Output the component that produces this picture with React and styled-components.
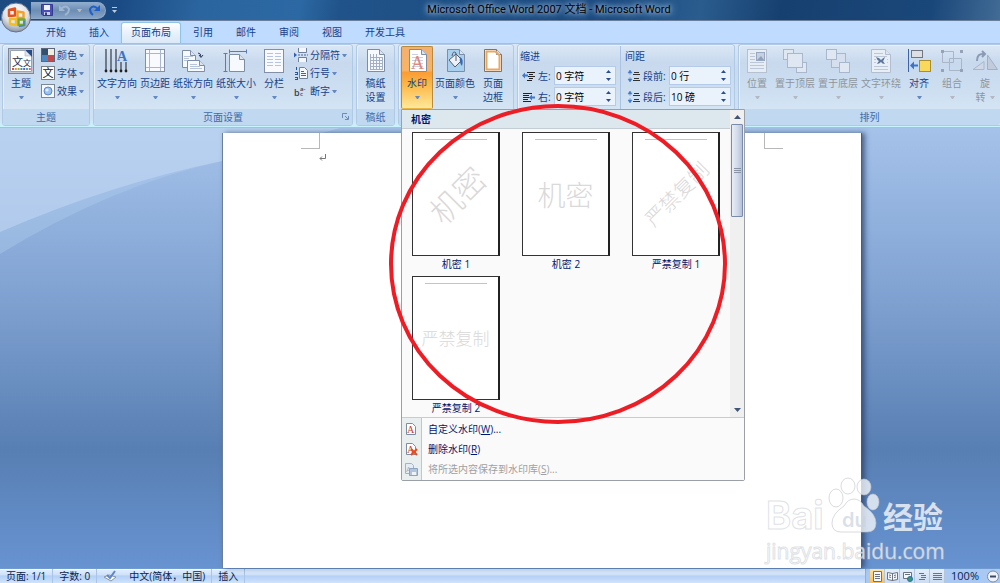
import React from 'react';
import styled, { createGlobalStyle, css } from 'styled-components';

const GlobalStyle = createGlobalStyle`
  * {
    box-sizing: border-box;
  }

  body {
    margin: 0;
    overflow: hidden;
    font-family: 'Open Sans', 'Noto Sans CJK SC', sans-serif;
    font-size: 10px;
    line-height: 14px;
    color: #15428b;
  }

  button,
  input {
    margin: 0;
    padding: 0;
    border: 0;
    background: none;
    color: inherit;
    font: inherit;
  }

  svg {
    display: block;
    flex: none;
  }
`;

const Window = styled.div`
  display: flex;
  flex-direction: column;
  position: relative;
  height: 100vh;
  overflow: hidden;
`;

/* ---------- title bar ---------- */

const TitleBar = styled.header`
  display: flex;
  align-items: center;
  height: 21px;
  flex: none;
  padding-left: 31px;
  border-bottom: 1px solid #6a7f9c;
  background: linear-gradient(
    100deg,
    #1d4a80 0%,
    #1b4b84 12%,
    #2b659f 20%,
    #2c68a3 30%,
    #205389 34%,
    #1c4a80 60%,
    #2a5c8e 70%,
    #16406f 78%,
    #1a477a 93%,
    #426b95 100%
  );
`;

const QuickAccess = styled.div`
  display: flex;
  align-items: center;
  gap: 6px;
  width: 75px;
  height: 17px;
  padding-left: 10px;
  border: 1px solid #8fabcb;
  border-left: 0;
  border-radius: 0 9px 9px 0;
  background: linear-gradient(#8fabcd, #6d8db3 50%, #86a3c6);
`;

const BarButton = styled.button`
  display: flex;
  align-items: center;
`;

const Title = styled.h1`
  flex: 1;
  margin: 0 24px 0 0;
  text-align: center;
  font-family: Roboto, 'Noto Sans CJK SC', sans-serif;
  font-size: 11px;
  font-weight: 400;
  line-height: 20px;
  color: #000;
  text-shadow: 0 0 4px rgba(190, 215, 240, 0.9), 0 0 8px rgba(170, 200, 230, 0.9),
    0 0 10px rgba(170, 200, 230, 0.6);
`;

const OfficeButton = styled.button`
  position: absolute;
  z-index: 3;
  top: 2px;
  left: 1px;
`;

/* ---------- tabs ---------- */

const Tabs = styled.nav`
  display: flex;
  gap: 1px;
  height: 22px;
  flex: none;
  padding: 1px 0 0 35px;
  background: #bfdbff;
`;

const Tab = styled.button`
  padding: 0 11px 2px;
  line-height: 18px;
  ${props =>
    props.$active &&
    css`
      padding: 0 9px 2px;
      border: 1px solid #8fc4e8;
      border-bottom: 0;
      border-radius: 3px 3px 0 0;
      background: linear-gradient(#fff, #e8f1fb 50%, #dbe8f7);
      box-shadow: 0 0 2px #9adcf5;
    `};
`;

/* ---------- ribbon ---------- */

const Ribbon = styled.div`
  display: flex;
  gap: 3px;
  position: relative;
  z-index: 2;
  flex: none;
  padding: 0 0 1px 2px;
  border-top: 1px solid #9ac3ea;
  border-bottom: 1px solid #9cc3df;
  background: linear-gradient(#d9e7f6, #c7dbf1 30%, #cfe2f5 90%, #c7f4fd);
`;

const GroupBox = styled.section`
  display: flex;
  flex-direction: column;
  flex: ${props => (props.$fill ? '1 1 0' : 'none')};
  min-width: ${props => props.$min || 0}px;
  border: 1px solid #b0c9e4;
  border-radius: 3px;
  background: linear-gradient(#dbe7f5, #c8d9ee 22%, #cddff1 60%, #dbeaf7);
  box-shadow: inset 1px 1px 0 #e8f1fa;
  ${props =>
    props.$fill &&
    css`
      overflow: hidden;
      border-right: 0;
      border-radius: 3px 0 0 3px;
    `};
`;

const GroupBody = styled.div`
  display: flex;
  gap: 1px;
  height: 64px;
  padding: 1px 2px 0;
  justify-content: ${props => (props.$center ? 'center' : 'flex-start')};
`;

const GroupLabel = styled.div`
  display: flex;
  justify-content: center;
  position: relative;
  height: 16px;
  line-height: 16px;
  border-radius: 0 0 2px 2px;
  background: #c0d8f0;
  color: #3e6aaa;
`;

const Launcher = styled.button`
  position: absolute;
  right: 3px;
  bottom: 5px;
`;

const LargeButton = styled.button`
  display: flex;
  flex: none;
  flex-direction: column;
  align-items: center;
  min-width: 32px;
  height: 63px;
  padding: 2px 1px 0;
  border-radius: 2px;
  white-space: nowrap;
  color: ${props => (props.$off ? '#8f959c' : 'inherit')};
  ${props =>
    props.$pressed &&
    css`
      border: 1px solid #b98a3c;
      border-bottom-color: #e9b646;
      padding: 1px 0 0;
      background: linear-gradient(#f3b06f, #f9b466 38%, #fb9c34 42%, #fdbb4d 65%, #ffe89a);
    `};
`;

const ButtonText = styled.span`
  display: flex;
  align-items: center;
  gap: 4px;
  height: 14px;
  &:first-of-type {
    margin-top: 2px;
  }
`;

const Arrow = styled.span`
  width: 5px;
  border: solid transparent;
  border-width: 3px 2px 0;
  border-top-color: ${props => (props.$off ? '#b3b9c2' : '#6388c2')};
`;

const SmallColumn = styled.div`
  display: flex;
  flex-direction: column;
  padding-left: 3px;
`;

const SmallButton = styled.button`
  display: flex;
  align-items: center;
  gap: 2px;
  height: 18px;
  white-space: nowrap;
`;

const FieldColumn = styled.div`
  display: flex;
  flex-direction: column;
  gap: 2px;
  padding-right: 3px;

  & + & {
    padding: 0 1px 0 4px;
    border-left: 1px solid #aac3e2;
  }
`;

const FieldHeading = styled.div`
  height: 18px;
  line-height: 20px;
`;

const Field = styled.div`
  display: flex;
  align-items: center;
  gap: 2px;
  height: 19px;
  padding-left: 2px;
`;

const FieldLabel = styled.label`
  width: ${props => (props.$wide ? 24 : 14)}px;
  white-space: nowrap;
`;

const SpinBox = styled.span`
  display: flex;
  width: 62px;
  height: 19px;
  border: 1px solid #b3cbe8;
  background: #eaf2fb;
`;

const SpinInput = styled.input`
  width: 46px;
  padding-left: 1px;
  color: #000;
`;

const SpinButtons = styled.span`
  display: flex;
  flex: 1;
  flex-direction: column;
`;

const SpinButton = styled.button`
  display: flex;
  flex: 1;
  align-items: center;
  justify-content: center;
`;

/* ---------- watermark gallery ---------- */

const MenuAnchor = styled.div`
  position: relative;
`;

const Menu = styled.div`
  position: absolute;
  z-index: 2;
  top: 63px;
  left: 0;
  width: 344px;
  border: 1px solid #9aa0a6;
  border-radius: 0 0 2px 2px;
  background: #fafafa;
  color: #00156e;
`;

const GalleryArea = styled.div`
  display: flex;
  border-bottom: 1px solid #c9cccf;
`;

const Gallery = styled.div`
  flex: 1;
`;

const GalleryHeading = styled.h2`
  margin: 0;
  height: 19px;
  padding-left: 9px;
  border-bottom: 1px solid #c5cdd3;
  background: #dde7ee;
  font-size: 10px;
  font-weight: 700;
  line-height: 18px;
`;

const GalleryGrid = styled.div`
  display: grid;
  grid-template-columns: repeat(3, 88px);
  gap: 4px 22px;
  padding: 3px 0 1px 10px;
`;

const GalleryItem = styled.button`
  display: flex;
  flex-direction: column;
  line-height: 16px;
  text-align: center;
`;

const Preview = styled.span`
  display: flex;
  flex-direction: column;
  align-items: center;
  width: 88px;
  height: 124px;
  padding: 6px 12px 8px;
  border: 1px solid #333;
  border-right: 2px solid #222;
  background: #fff;
`;

const PreviewRule = styled.span`
  width: 62px;
  height: 1px;
  flex: none;
  background: #c4c4c4;
`;

const PreviewText = styled.span`
  display: flex;
  flex: 1;
  align-items: center;
  font-family: 'Noto Sans CJK SC', sans-serif;
  font-size: ${props => props.$size}px;
  font-weight: 300;
  line-height: 1;
  white-space: nowrap;
  color: #d9d9d9;
  transform: ${props => (props.$diagonal ? 'rotate(-45deg)' : 'none')};
`;

const Caption = styled.span`
  width: 88px;
`;

const ScrollTrack = styled.div`
  display: flex;
  flex-direction: column;
  align-items: center;
  width: 14px;
  background: #f0f0f1;
`;

const ScrollButton = styled.button`
  display: flex;
  align-items: center;
  justify-content: center;
  width: 14px;
  height: 14px;
`;

const ScrollThumb = styled.div`
  display: flex;
  flex-direction: column;
  align-items: center;
  justify-content: center;
  gap: 1px;
  width: 12px;
  height: 93px;
  margin-bottom: auto;
  border: 1px solid #7b8bab;
  border-radius: 1px;
  background: linear-gradient(90deg, #e8eef7, #d3dcea 50%, #b3c2da);

  i {
    width: 7px;
    height: 1px;
    background: #8893a6;
  }
`;

const MenuList = styled.div`
  display: flex;
  flex-direction: column;
  padding: 1px 0;
  background: linear-gradient(90deg, #e9eeee 19px, #c5c5c5 19px, #c5c5c5 20px, #fafafa 20px);
`;

const MenuItem = styled.button`
  display: flex;
  align-items: center;
  gap: 10px;
  height: 20px;
  padding-left: 2px;
  color: ${props => (props.disabled ? '#a0a0a0' : 'inherit')};
`;

const RedCircle = styled.svg`
  position: absolute;
  top: -7px;
  left: -13px;
  pointer-events: none;
`;

/* ---------- document ---------- */

const Workspace = styled.main`
  display: flex;
  justify-content: center;
  position: relative;
  flex: 1;
  min-height: 0;
  padding: 5px 0 0 84px;
  background: linear-gradient(#a5c2ea, #83a5d4 35%, #587fb3 73%, #6793d1);
`;

const Swoosh = styled.svg`
  position: absolute;
  top: 0;
  left: 0;
`;

const Paper = styled.article`
  position: relative;
  width: 640px;
  padding: 0 78px;
  border-left: 1px solid #6c7f9a;
  border-right: 1px solid #4d5c74;
  background: #fff;
  box-shadow: 3px 0 5px rgba(40, 60, 95, 0.7);
`;

const Margins = styled.div`
  display: flex;
  justify-content: space-between;
`;

const Corner = styled.span`
  width: 19px;
  height: 16px;
  border: solid #b8b8b8;
  border-width: ${props => (props.$left ? '0 1px 1px 0' : '0 0 1px 1px')};
`;

const Paragraph = styled.div`
  padding: 5px 0 0 18px;
`;

/* ---------- site mark ---------- */

const SiteMark = styled.div`
  position: absolute;
  z-index: 1;
  right: 54px;
  bottom: 20px;
  width: 180px;
  color: rgba(255, 255, 255, 0.76);
  -webkit-text-stroke: 1px rgba(190, 196, 204, 0.5);
`;

const MarkRow = styled.div`
  display: flex;
  align-items: flex-end;
  height: 60px;
  margin-bottom: 2px;
  font-weight: 700;
`;

const MarkLatin = styled.span`
  width: 62px;
  font-family: Inter, sans-serif;
  font-size: 38px;
  line-height: 44px;
`;

const MarkChinese = styled.span`
  padding-left: 3px;
  font-size: 30px;
  line-height: 40px;
  -webkit-text-stroke: 0;
`;

const MarkUrl = styled.div`
  font-size: 21px;
  line-height: 24px;
`;

/* ---------- status bar ---------- */

const StatusBar = styled.footer`
  display: flex;
  align-items: center;
  height: 15px;
  flex: none;
  border-top: 1px solid #6f9bd0;
  background: linear-gradient(#e3effd, #cfe2fa 40%, #b3d0f5 50%, #cfe3fb);
  box-shadow: inset 0 1px 0 #f4f9ff;
  color: #0a1f4f;
  white-space: nowrap;
`;

const StatusItem = styled.span`
  display: flex;
  align-items: center;
  gap: 12px;
  height: 14px;
  padding: 0 6px;
  border-right: 1px solid #a9c4e6;
`;

const ViewTools = styled.div`
  display: flex;
  align-items: center;
  height: 14px;
  margin-left: auto;
  padding-left: 4px;
  border-left: 1px solid #8eb0dd;
  background: #a9c8f2;
`;

const ViewButton = styled.button`
  display: flex;
  align-items: center;
  justify-content: center;
  width: 15px;
  height: 14px;
  border-right: 1px solid #b4c6de;
  background: ${props =>
    props.$active ? 'linear-gradient(#fde2a6, #fbbf57)' : 'linear-gradient(#e4eefb, #cbdcf2)'};
`;

const ZoomLevel = styled.button`
  padding: 0 6px;
  font-size: 11px;
`;

/* ---------- icons ---------- */

const Icon = ({ size = 26, children }) => (
  <svg width={size} height={size} viewBox={`0 0 ${size} ${size}`} fill="none" aria-hidden="true">
    {children}
  </svg>
);

const Sheet = ({ x = 4, y = 2, w = 17, h = 22, fill = '#f6f9fd', stroke = '#7d8da6' }) => (
  <g stroke={stroke}>
    <path
      d={`M${x + 0.5} ${y + 0.5}h${w - 6}l5 5v${h - 6}h-${w - 1}z`}
      fill={fill}
    />
    <path d={`M${x + w - 5.5} ${y + 0.5}v5h5`} fill="#dbe4f0" />
  </g>
);

const themeDots = ['#d9534f', '#e8953a', '#8db04a', '#4a8ec9', '#7c5ba6', '#3bb0a8', '#e05a8a'];

const ThemeIcon = () => (
  <Icon>
    <rect x="0.5" y="0.5" width="25" height="25" fill="#bfc6d1" stroke="#7c8798" />
    <path d="M2.5 2.5h15l6 6v15h-21z" fill="#fff" stroke="#98a4b6" />
    <path d="M17 2h7v7z" fill="#284a86" />
    <path d="M17 2v6h6z" fill="#dce5f1" stroke="#8fa0b9" strokeWidth="0.5" />
    <text x="4" y="18" fontSize="11" fill="#1b2f50">文</text>
    <text x="15" y="18" fontSize="8" fill="#1b2f50">文</text>
    {themeDots.map((color, i) => (
      <rect key={color} x={4 + i * 2.8} y="20" width="2" height="2" fill={color} />
    ))}
  </Icon>
);

const ColorsIcon = () => (
  <Icon size={14}>
    <rect x="1" y="1" width="6" height="6" fill="#33506f" />
    <rect x="7" y="1" width="6" height="6" fill="#f2eedf" />
    <rect x="1" y="7" width="6" height="6" fill="#4f87bf" />
    <rect x="7" y="7" width="6" height="6" fill="#c34a4a" />
    <rect x="0.5" y="0.5" width="13" height="13" stroke="#5b6879" />
  </Icon>
);

const FontsIcon = () => (
  <Icon size={14}>
    <rect x="0.5" y="0.5" width="13" height="13" fill="#fff" stroke="#777e88" />
    <text x="1.5" y="11" fontSize="11" fill="#111">文</text>
  </Icon>
);

const EffectsIcon = () => (
  <Icon size={14}>
    <rect x="0.5" y="0.5" width="13" height="13" fill="#f5f9fe" stroke="#7b8797" />
    <circle cx="7" cy="7" r="4" fill="#9cc1ef" stroke="#5d86c4" />
    <circle cx="6" cy="6" r="1.6" fill="#e4f0fd" />
  </Icon>
);

const DirectionIcon = () => (
  <Icon>
    {[2, 7, 12].map(x => (
      <g key={x}>
        <path d={`M${x} 1v22`} stroke="#333b47" strokeWidth="1.2" />
        <circle cx={x} cy="23" r="1.4" fill="#222" />
      </g>
    ))}
    {[17, 22].map(x => (
      <g key={x}>
        <path d={`M${x} 14v9`} stroke="#333b47" strokeWidth="1.2" />
        <circle cx={x} cy="23" r="1.4" fill="#222" />
      </g>
    ))}
    <text x="13" y="13" fontFamily="Liberation Serif, serif" fontWeight="700" fontSize="14" fill="#3d73c4">
      A
    </text>
  </Icon>
);

const MarginsIcon = () => (
  <Icon>
    <rect x="3.5" y="1.5" width="19" height="22" fill="#f8fafd" stroke="#8190a8" />
    <path d="M7.5 2v21M18.5 2v21M4 5.5h18M4 19.5h18" stroke="#a7b7d2" />
  </Icon>
);

const OrientationIcon = () => (
  <Icon>
    <Sheet x={2} y={2} w={14} h={18} />
    <path d="M4 8.5h9M4 10.5h5M4 12.5h3" stroke="#b6c3d8" />
    <path d="M18 5q3 0 3 4m-2-2l2 2.500 2-2.500" stroke="#2c3d5a" />
    <path d="M7.5 12.5h12l5 5v6h-17z" fill="#f6f9fd" stroke="#7d8da6" />
    <path d="M19.5 12.5v5h5" fill="#dbe4f0" stroke="#7d8da6" />
    <path d="M10 16.5h7M10 18.5h10M10 20.5h12" stroke="#b6c3d8" />
  </Icon>
);

const PaperSizeIcon = () => (
  <Icon>
    <path d="M6 3.5h18M6.500 1.500v4M23.500 1.500v4M2.500 6v18M.5 5.500h4M.5 23.500h4" stroke="#5a7bb5" />
    <Sheet x={6} y={6} w={16} h={18} />
  </Icon>
);

const ColumnsIcon = () => (
  <Icon>
    <rect x="3.500" y="1.500" width="19" height="23" fill="#f8fafd" stroke="#8190a8" />
    <path
      d="M6 5.500h6M14 5.500h6M6 8.500h6M14 8.500h6M6 11.500h6M14 11.500h6M6 14.500h6M14 14.500h6M6 17.500h6M14 17.500h6"
      stroke="#b4c3de"
    />
  </Icon>
);

const BreaksIcon = () => (
  <Icon size={14}>
    <path d="M4.500 0v4.500h8V0M4.500 14V9.500h8V14" fill="#f3f7fc" stroke="#71809a" />
    <path d="M4 7h10" stroke="#4d6491" strokeDasharray="2 1" />
    <path d="M0 4.500l3 2.500-3 2.500z" fill="#2d62bd" />
  </Icon>
);

const LineNumbersIcon = () => (
  <Icon size={14}>
    <path d="M5.500 1.500h5l3 3v8h-8z" fill="#f4f7fb" stroke="#71809a" />
    <path d="M7 5.500h3M7 7.500h5M7 9.500h5" stroke="#53627c" />
    <path d="M2.500 1v3M1 6.500h2M1 8.500h2M1 11.500h2M1 13.500h2M3.500 6v3M3.500 11v3" stroke="#2455a8" />
  </Icon>
);

const HyphenIcon = () => (
  <Icon size={14}>
    <text x="0" y="12" fontSize="9" fontWeight="600" fill="#39404c">b</text>
    <text x="6" y="7" fontSize="6" fontWeight="600" fill="#39404c">a-</text>
    <text x="6" y="12" fontSize="6" fontWeight="600" fill="#39404c">c</text>
  </Icon>
);

const GridPaperIcon = () => (
  <Icon>
    <Sheet x={4} w={18} h={23} y={1} />
    <path
      d="M7 9.500h12M7 12.500h12M7 15.500h12M7 18.500h12M7 21.500h12M7.500 6v16M10.500 6v16M13.500 6v16M16.500 9v13M19.500 9v13"
      stroke="#a3afc2"
    />
  </Icon>
);

const WatermarkIcon = () => (
  <Icon>
    <Sheet x={5} w={18} h={23} y={1} fill="#fff" />
    <path d="M8 6.500h6M8 9.500h11M8 12.500h11M8 15.500h11M8 18.500h11" stroke="#c9d1de" />
    <text x="7" y="21" fontFamily="Liberation Serif, serif" fontSize="18" fill="#dc8882">A</text>
  </Icon>
);

const PageColorIcon = () => (
  <Icon>
    <Sheet x={5} w={18} h={23} y={1} fill="#a9d0ef" />
    <path d="M7 12l7-6 6 6-7 7z" fill="#eef1f5" stroke="#525e6e" />
    <path d="M14 13V5q-3-3-4 3" stroke="#525e6e" />
    <path d="M18 9q4 2 2 9q-3-3-2-9z" fill="#3768b0" />
  </Icon>
);

const BorderIcon = () => (
  <Icon>
    <Sheet x={4} w={18} h={23} y={1} fill="#fff" stroke="#7f7468" />
    <path d="M6.500 3.500h9l4 4v14h-13z" stroke="#e9a765" strokeWidth="2" />
  </Icon>
);

const IndentIcon = ({ right }) => (
  <Icon size={14}>
    {right ? (
      <g>
        <path d="M1 3.500h9M1 5.500h6M1 7.500h7M1 9.500h5M1 11.500h8" stroke="#222" />
        <path d="M7 7.500l3-3v2h3v2h-3v2z" fill="#3f78cc" />
      </g>
    ) : (
      <g>
        <path d="M5 3.500h8M7 5.500h4M6 7.500h7M7 9.500h4M5 11.500h5" stroke="#222" />
        <path d="M0 6.500l3-3v2h3v2H3v2z" fill="#3f78cc" />
      </g>
    )}
  </Icon>
);

const SpacingIcon = () => (
  <Icon size={14}>
    <path d="M3 1l2 3H1zM3 13l2-3H1zM3 4v2M3 8v2" fill="#3f78cc" stroke="#3f78cc" strokeWidth="0.5" />
    <path d="M7 3.500h5M6 5.500h7M7 9.500h5M6 11.500h7" stroke="#333" />
  </Icon>
);

const PositionIcon = () => (
  <Icon>
    <rect x="3.500" y="1.500" width="19" height="23" fill="#e7edf5" stroke="#b5c0d1" />
    <path d="M6 5.500h5M6 8.500h5M6 11.500h5M6 14.500h14M6 17.500h14M6 20.500h14" stroke="#bcc8da" />
    <rect x="12.500" y="4.500" width="8" height="8" fill="#c5d0e2" stroke="#99a8c0" />
    <path d="M13 12l4-4 3 4z" fill="#8fa0bd" />
  </Icon>
);

const FrontIcon = () => (
  <Icon>
    <g fill="#dfe7f3" stroke="#a9b7cd">
      <rect x="1.500" y="1.500" width="10" height="10" />
      <rect x="14.500" y="14.500" width="10" height="10" />
      <rect x="5.500" y="5.500" width="15" height="14" />
    </g>
  </Icon>
);

const BackIcon = () => (
  <Icon>
    <g fill="#dfe7f3" stroke="#a9b7cd">
      <rect x="6.500" y="5.500" width="14" height="14" fill="#d5dfed" />
      <rect x="1.500" y="1.500" width="10" height="10" />
      <rect x="14.500" y="14.500" width="10" height="10" />
    </g>
  </Icon>
);

const WrapIcon = () => (
  <Icon>
    <Sheet x={3} w={20} h={24} y={1} fill="#e8eef6" stroke="#b2bed0" />
    <path d="M6 5.500h9M6 8.500h13M6 11.500h2M6 14.500h2M19 11.500h1M19 14.500h1M6 18.500h14M6 21.500h14" stroke="#bcc8da" />
    <path d="M8 9q4 1 5 3 2-2 4-3-1 3-2 4l2 3q-3 0-4-2-2 2-4 2 1-2 2-3-2-1-3-4z" fill="#5f769e" />
  </Icon>
);

const AlignIcon = () => (
  <Icon>
    <path d="M2.500 1v23" stroke="#3b62ad" />
    <rect x="5.500" y="2.500" width="11" height="7" fill="#dcdfe3" stroke="#707781" />
    <rect x="13.500" y="12.500" width="11" height="11" fill="#f8d95c" stroke="#a98d32" />
    <path d="M4 17.500l4-4v3h4v2H8v3z" fill="#3b72cc" />
  </Icon>
);

const GroupIcon = () => (
  <Icon>
    <path d="M3.500 3.500h11v11h-11zM10.500 10.500h12v12h-12z" stroke="#a9b5c9" />
    <path d="M2 2h3v3H2zM21 2h3v3h-3zM2 21h3v3H2zM21 21h3v3h-3z" fill="#95a2b9" />
  </Icon>
);

const RotateIcon = () => (
  <Icon>
    <path d="M1 21.500l11-8v8z" fill="#ced8e7" stroke="#aab6ca" />
    <path d="M15.500 7l10 14.500h-10z" fill="#c1cbdc" stroke="#a2afc5" />
    <path d="M5 13q0-8 7-7m-2-3l3 3-3 3" stroke="#8c9ab3" strokeWidth="2" />
  </Icon>
);

const OfficeLogo = () => (
  <svg width="32" height="32" viewBox="0 0 32 32" aria-hidden="true">
    <defs>
      <radialGradient id="orb" cx="0.5" cy="0.3" r="0.7">
        <stop offset="0" stopColor="#fff" />
        <stop offset="0.6" stopColor="#dde1e7" />
        <stop offset="1" stopColor="#8993a3" />
      </radialGradient>
    </defs>
    <circle cx="15" cy="15.500" r="14.500" fill="url(#orb)" stroke="#66748a" />
    <g fill="none" strokeWidth="2.500" strokeLinejoin="round">
      <path d="M8 8l6-1.500v7L8 14z" stroke="#e0521f" />
      <path d="M16.500 9.500l6 1v5.500h-6z" stroke="#f2a12b" />
      <path d="M9 17h6v6l-6-1z" stroke="#f5bd25" />
      <path d="M17.500 17.500h6v5.500h-6z" stroke="#77a93a" />
      <path d="M18 24.500l5-1v-5" stroke="#3b87cf" strokeWidth="1.500" />
    </g>
  </svg>
);

const SaveIcon = () => (
  <Icon size={12}>
    <path d="M.5.500h11v11H2l-1.500-1.500z" fill="#4b4fb5" stroke="#343a8e" />
    <path d="M3 1h6v5H3z" fill="#eef2fb" />
    <path d="M3 8h6v3H3z" fill="#c6cce9" />
    <path d="M4 8.500h2V11H4z" fill="#343a8e" />
  </Icon>
);

const UndoIcon = () => (
  <Icon size={12}>
    <path d="M2 5q5-5 8 0 0 4-4 6" stroke="#9fb6d3" strokeWidth="2" />
    <path d="M0 1v6h6z" fill="#9fb6d3" />
  </Icon>
);

const RedoIcon = () => (
  <Icon size={12}>
    <path d="M10 5q-5-5-8 0 0 4 3 6" stroke="#1f5fcb" strokeWidth="2" />
    <path d="M12 1v6H6z" fill="#1f5fcb" />
  </Icon>
);

const MenuWatermarkIcon = ({ variant }) => (
  <Icon size={14}>
    {variant === 'save' ? (
      <g>
        <path d="M1.500 1.500h6l2 2v8h-8z" fill="#e6ecf3" stroke="#a3b2c6" />
        <text x="2" y="10" fontSize="8" fill="#9fafc6">A</text>
        <path d="M5.500 6.500h8v7h-8z" fill="#b2c3da" stroke="#8ea3c0" />
        <path d="M8 10h4v3H8z" fill="#eff3f8" />
      </g>
    ) : (
      <g>
        <path d="M2.500 1.500h6l3 3v8h-9z" fill="#fff" stroke="#7e8ca1" />
        <text x="3" y="11" fontFamily="Liberation Serif, serif" fontSize="10" fill="#c8373a">A</text>
        {variant === 'remove' && <path d="M7 7l6 6M13 7l-6 6" stroke="#e84b1c" strokeWidth="2" />}
      </g>
    )}
  </Icon>
);

const Triangle = ({ up }) => (
  <svg width="7" height="4" viewBox="0 0 7 4" aria-hidden="true">
    <path d={up ? 'M0 4l3.500-4L7 4z' : 'M0 0l3.500 4L7 0z'} fill="#3f5478" />
  </svg>
);

const SpinTriangle = ({ up }) => (
  <svg width="5" height="3" viewBox="0 0 5 3" aria-hidden="true">
    <path d={up ? 'M0 3l2.500-3L5 3z' : 'M0 0l2.500 3L5 0z'} fill="#2a4d92" />
  </svg>
);

const ProofIcon = () => (
  <svg width="14" height="12" viewBox="0 0 14 12" fill="none" aria-hidden="true">
    <path d="M1 7l5-2 7 2-5 4z" fill="#fdfdfd" stroke="#8892a2" />
    <path d="M4 5l3 3 5-7" stroke="#5b86c9" strokeWidth="2" />
  </svg>
);

const viewPaths = [
  'M1.500.500h8v10h-8zM3 3.500h5M3 5.500h5M3 7.500h5',
  'M.5 1.500l5 1 5-1v7l-5 1-5-1zM5.500 2v8M2 4l2 .5M7 4.500L9 4M2 6l2 .5M7 6.500L9 6',
  'M1.500 1.500h8v6h-8zM3 3.500h5',
  'M2 2.500h5M4 4.500h5M4 6.500h5M2 8.500h6',
  'M1 2.500h9M1 4.500h9M1 6.500h9M1 8.500h9'
];

const ViewIcon = ({ index }) => (
  <Icon size={11}>
    <path d={viewPaths[index]} stroke="#6a7380" fill={index < 3 ? '#f5f7fa' : 'none'} />
    {index === 2 && <circle cx="8" cy="8" r="2.500" fill="#3a9a70" stroke="#2a6fb0" />}
  </Icon>
);

/* ---------- parts ---------- */

const RibbonGroup = ({ label, min, fill, center, launcher, children }) => (
  <GroupBox $min={min} $fill={fill}>
    <GroupBody $center={center}>{children}</GroupBody>
    <GroupLabel>
      {label}
      {launcher && (
        <Launcher aria-label={label}>
          <svg width="7" height="7" viewBox="0 0 7 7" fill="none">
            <path d="M.5 5V.500H5M3 3l3 3M6.500 3v3.500H3" stroke="#6c8cb8" />
          </svg>
        </Launcher>
      )}
    </GroupLabel>
  </GroupBox>
);

// A label of two lines takes the line that the arrow would stand on
const BigButton = ({ icon, lines, off, pressed, arrow = true }) => (
  <LargeButton $off={off} $pressed={pressed} disabled={off}>
    {icon}
    <ButtonText>{lines[0]}</ButtonText>
    <ButtonText>
      {lines[1]}
      {arrow && <Arrow $off={off} />}
    </ButtonText>
  </LargeButton>
);

const RowButton = ({ icon, text }) => (
  <SmallButton>
    {icon}
    {text}
    <Arrow />
  </SmallButton>
);

const SpinField = ({ id, icon, label, value, wide }) => (
  <Field>
    {icon}
    <FieldLabel htmlFor={id} $wide={wide}>
      {label}
    </FieldLabel>
    <SpinBox>
      <SpinInput id={id} type="text" defaultValue={value} />
      <SpinButtons>
        <SpinButton>
          <SpinTriangle up />
        </SpinButton>
        <SpinButton>
          <SpinTriangle />
        </SpinButton>
      </SpinButtons>
    </SpinBox>
  </Field>
);

const previews = [
  { caption: '机密 1', text: '机密', size: 32, diagonal: true },
  { caption: '机密 2', text: '机密', size: 28 },
  { caption: '严禁复制 1', text: '严禁复制', size: 20, diagonal: true },
  { caption: '严禁复制 2', text: '严禁复制', size: 17 }
];

const WatermarkMenu = () => (
  <Menu>
    <GalleryArea>
      <Gallery>
        <GalleryHeading>机密</GalleryHeading>
        <GalleryGrid>
          {previews.map(item => (
            <GalleryItem key={item.caption}>
              <Preview>
                <PreviewRule />
                <PreviewText $size={item.size} $diagonal={item.diagonal}>
                  {item.text}
                </PreviewText>
              </Preview>
              <Caption>{item.caption}</Caption>
            </GalleryItem>
          ))}
        </GalleryGrid>
      </Gallery>
      <ScrollTrack>
        <ScrollButton>
          <Triangle up />
        </ScrollButton>
        <ScrollThumb>
          <i />
          <i />
          <i />
        </ScrollThumb>
        <ScrollButton>
          <Triangle />
        </ScrollButton>
      </ScrollTrack>
    </GalleryArea>
    <MenuList>
      <MenuItem>
        <MenuWatermarkIcon />
        <span>
          自定义水印(<u>W</u>)...
        </span>
      </MenuItem>
      <MenuItem>
        <MenuWatermarkIcon variant="remove" />
        <span>
          删除水印(<u>R</u>)
        </span>
      </MenuItem>
      <MenuItem disabled>
        <MenuWatermarkIcon variant="save" />
        <span>
          将所选内容保存到水印库(<u>S</u>)...
        </span>
      </MenuItem>
    </MenuList>
    <RedCircle width="340" height="324" viewBox="0 0 340 324" fill="none">
      <ellipse cx="169" cy="161" rx="167" ry="158" stroke="#ee1c24" strokeWidth="4" />
    </RedCircle>
  </Menu>
);

const Paw = () => (
  <svg width="52" height="60" viewBox="0 0 52 60" aria-hidden="true">
    <g fill="#fff" fillOpacity="0.74" stroke="#bfc3c9" strokeOpacity="0.6">
      <ellipse cx="8" cy="21" rx="7" ry="9" />
      <ellipse cx="20" cy="9" rx="7" ry="8" />
      <ellipse cx="36" cy="10" rx="7" ry="8" />
      <ellipse cx="45" cy="25" rx="6" ry="8" />
      <path d="M26 22q6 0 10 7 12 8 12 17 0 9-9 9H13q-9 0-9-9 0-9 12-17 4-7 10-7z" />
    </g>
    <text
      x="14"
      y="50"
      fontFamily="Inter, sans-serif"
      fontSize="20"
      fontWeight="600"
      fill="#c9d2df"
      fillOpacity="0.7"
    >
      du
    </text>
  </svg>
);

const tabs = ['开始', '插入', '页面布局', '引用', '邮件', '审阅', '视图', '开发工具'];

const App = () => (
  <Window>
    <GlobalStyle />
    <OfficeButton aria-label="Office">
      <OfficeLogo />
    </OfficeButton>

    <TitleBar>
      <QuickAccess>
        <BarButton>
          <SaveIcon />
        </BarButton>
        <BarButton>
          <UndoIcon />
        </BarButton>
        <Arrow $off />
        <BarButton>
          <RedoIcon />
        </BarButton>
      </QuickAccess>
      <BarButton>
        <svg width="16" height="8" viewBox="0 0 16 8" aria-hidden="true">
          <path d="M6 1h5v1H6zM6 4h5L8.500 7z" fill="#b9cbe2" />
        </svg>
      </BarButton>
      <Title>Microsoft Office Word 2007 文档 - Microsoft Word</Title>
    </TitleBar>

    <Tabs>
      {tabs.map(name => (
        <Tab key={name} $active={name === '页面布局'}>
          {name}
        </Tab>
      ))}
    </Tabs>

    <Ribbon>
      <RibbonGroup label="主题" min={88}>
        <BigButton icon={<ThemeIcon />} lines={['主题']} />
        <SmallColumn>
          <RowButton icon={<ColorsIcon />} text="颜色" />
          <RowButton icon={<FontsIcon />} text="字体" />
          <RowButton icon={<EffectsIcon />} text="效果" />
        </SmallColumn>
      </RibbonGroup>

      <RibbonGroup label="页面设置" min={260} launcher>
        <BigButton icon={<DirectionIcon />} lines={['文字方向']} />
        <BigButton icon={<MarginsIcon />} lines={['页边距']} />
        <BigButton icon={<OrientationIcon />} lines={['纸张方向']} />
        <BigButton icon={<PaperSizeIcon />} lines={['纸张大小']} />
        <BigButton icon={<ColumnsIcon />} lines={['分栏']} />
        <SmallColumn>
          <RowButton icon={<BreaksIcon />} text="分隔符" />
          <RowButton icon={<LineNumbersIcon />} text="行号" />
          <RowButton icon={<HyphenIcon />} text="断字" />
        </SmallColumn>
      </RibbonGroup>

      <RibbonGroup label="稿纸" min={39} center>
        <BigButton icon={<GridPaperIcon />} lines={['稿纸', '设置']} arrow={false} />
      </RibbonGroup>

      <RibbonGroup min={116}>
        <MenuAnchor>
          <BigButton icon={<WatermarkIcon />} lines={['水印']} pressed />
          <WatermarkMenu />
        </MenuAnchor>
        <BigButton icon={<PageColorIcon />} lines={['页面颜色']} />
        <BigButton icon={<BorderIcon />} lines={['页面', '边框']} arrow={false} />
      </RibbonGroup>

      <RibbonGroup min={217}>
        <FieldColumn>
          <FieldHeading>缩进</FieldHeading>
          <SpinField id="indent-left" icon={<IndentIcon />} label="左:" value="0 字符" />
          <SpinField id="indent-right" icon={<IndentIcon right />} label="右:" value="0 字符" />
        </FieldColumn>
        <FieldColumn>
          <FieldHeading>间距</FieldHeading>
          <SpinField id="space-before" icon={<SpacingIcon />} label="段前:" value="0 行" wide />
          <SpinField id="space-after" icon={<SpacingIcon />} label="段后:" value="10 磅" wide />
        </FieldColumn>
      </RibbonGroup>

      <RibbonGroup label="排列" fill>
        <BigButton icon={<PositionIcon />} lines={['位置']} off />
        <BigButton icon={<FrontIcon />} lines={['置于顶层']} off />
        <BigButton icon={<BackIcon />} lines={['置于底层']} off />
        <BigButton icon={<WrapIcon />} lines={['文字环绕']} off />
        <BigButton icon={<AlignIcon />} lines={['对齐']} />
        <BigButton icon={<GroupIcon />} lines={['组合']} off />
        <BigButton icon={<RotateIcon />} lines={['旋', '转']} off />
      </RibbonGroup>
    </Ribbon>

    <Workspace>
      <Swoosh width="340" height="160" viewBox="0 0 340 160" fill="none" aria-hidden="true">
        <path d="M0 0h340L222 33Q111 58 0 126z" fill="#b5d0f0" fillOpacity="0.35" />
        <path d="M0 0h340L222 33Q111 56 0 104z" fill="#c8dcf5" fillOpacity="0.5" />
      </Swoosh>
      <Paper>
        <Margins>
          <Corner $left />
          <Corner />
        </Margins>
        <Paragraph>
          <svg width="7" height="7" viewBox="0 0 7 7" fill="none" aria-hidden="true">
            <path d="M6.500 0v4.500H1M3 2.500l-2 2 2 2" stroke="#777" />
          </svg>
        </Paragraph>
      </Paper>
    </Workspace>

    <SiteMark>
      <MarkRow>
        <MarkLatin>Bai</MarkLatin>
        <Paw />
        <MarkChinese>经验</MarkChinese>
      </MarkRow>
      <MarkUrl>jingyan.baidu.com</MarkUrl>
    </SiteMark>

    <StatusBar>
      <StatusItem>页面: 1/1</StatusItem>
      <StatusItem>字数: 0</StatusItem>
      <StatusItem>
        <ProofIcon />
        中文(简体，中国)
      </StatusItem>
      <StatusItem>插入</StatusItem>
      <ViewTools>
        {viewPaths.map((path, i) => (
          <ViewButton key={path} $active={i === 0}>
            <ViewIcon index={i} />
          </ViewButton>
        ))}
        <ZoomLevel>100%</ZoomLevel>
        <BarButton>
          <svg width="15" height="13" viewBox="0 0 15 13" fill="none" aria-hidden="true">
            <circle cx="8" cy="6.500" r="5.500" fill="#eef3fa" stroke="#7b8ba5" />
            <path d="M5 6.500h6" stroke="#3b4b66" strokeWidth="2" />
          </svg>
        </BarButton>
      </ViewTools>
    </StatusBar>
  </Window>
);

export default App;
